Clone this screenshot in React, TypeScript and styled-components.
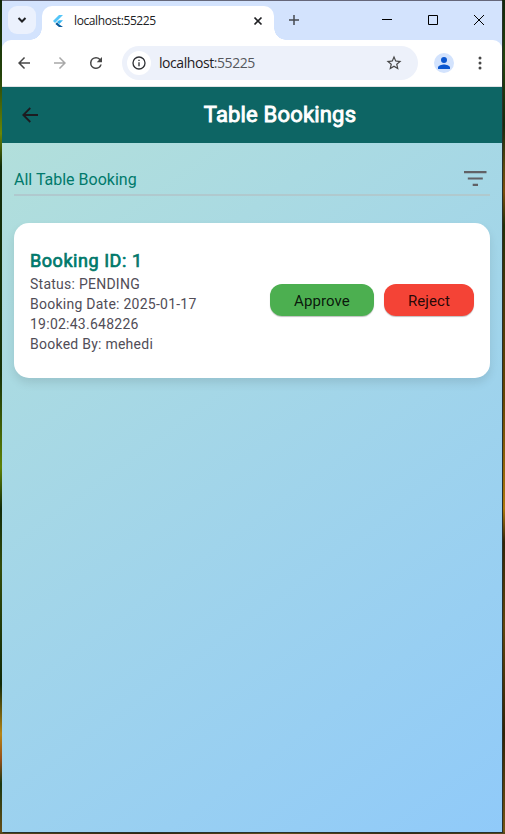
import React from "react";
import styled, { createGlobalStyle } from "styled-components";

const GlobalStyle = createGlobalStyle`
  * { box-sizing: border-box; }
  body { margin: 0; font-family: Roboto, sans-serif; overflow: hidden; }
  svg { display: block; flex: none; }
  button { font: inherit; border: 0; padding: 0; background: none; }
`;

const Desktop = styled.div`
  height: 834px;
  padding: 0 3px 2px 2px;
  background:
    linear-gradient(90deg, #57471a, #31260d 30%, #62501d 55%, #352b10 80%, #5a491b) 0 832px / 505px 2px no-repeat,
    linear-gradient(180deg, #12260b, #25430c 7%, #17290b 15%, #59480d 20%, #7a4d0b 23%, #223006 27%, #453509 35%, #654604 48%, #ad780c 61%, #322407 65%, #60450c 75%, #302207 88%, #765614) 502px 0 / 3px 834px no-repeat,
    linear-gradient(180deg, #10280a, #24430b 9%, #698606 16%, #112c09 20%, #173309 45%, #5d8206 56%, #112b0a 61%, #334c0b 68%, #102908 82%, #b68517 88%, #96501a 91%, #193812 94%, #6b4e17) 0 0 / 2px 834px no-repeat;
`;

const BrowserWindow = styled.div`
  height: 832px;
  display: flex;
  flex-direction: column;
  border-top: 1px solid #65677a;
  background: #d3e3fd;
  box-shadow: 1px 1px 0 #27302b;
`;

const TabStrip = styled.div`
  height: 39px;
  display: flex;
  align-items: flex-start;
`;

const TabSearch = styled.button`
  width: 28px;
  height: 28px;
  margin: 5px 0 0 6px;
  border-radius: 9px;
  display: grid;
  place-items: center;
  background: #ebf1fd;
`;

const Tab = styled.div`
  position: relative;
  width: 232px;
  height: 34px;
  margin: 5px 0 0 6px;
  padding: 0 10px 5px 10px;
  display: flex;
  align-items: center;
  border-radius: 10px 10px 0 0;
  background: #fff;
  &::before, &::after {
    content: "";
    position: absolute;
    bottom: 0;
    width: 12px;
    height: 12px;
  }
  &::before { left: -12px; background: radial-gradient(circle at 0 0, transparent 11.5px, #fff 12px); }
  &::after { right: -12px; background: radial-gradient(circle at 100% 0, transparent 11.5px, #fff 12px); }
`;

const TabTitle = styled.span`
  flex: 1;
  margin-left: 10px;
  font: 12px/16px "Open Sans", sans-serif;
  letter-spacing: -0.4px;
  color: #202124;
`;

const WindowControls = styled.div`
  margin-left: auto;
  display: flex;
  button { width: 46px; height: 38px; display: grid; place-items: center; }
`;

const NewTab = styled.button`
  width: 28px;
  height: 38px;
  margin-left: 6px;
  display: grid;
  place-items: center;
`;

const Toolbar = styled.div`
  height: 47px;
  display: flex;
  align-items: center;
  padding-left: 13px;
  background: #fff;
  border-radius: 9px 9px 0 0;
  border-bottom: 1px solid #dfe3e6;
`;

const NavIcons = styled.div`
  display: flex;
  gap: 18px;
  width: 107px;
`;

const AddressBar = styled.div`
  width: 296px;
  height: 34px;
  border-radius: 17px;
  display: flex;
  align-items: center;
  padding: 0 15px 0 5px;
  background: #edf1fa;
`;

const SiteInfo = styled.span`
  width: 24px;
  height: 24px;
  border-radius: 50%;
  display: grid;
  place-items: center;
  background: #fff;
`;

const Url = styled.span`
  flex: 1;
  margin-left: 8px;
  font: 14px/20px "Open Sans", sans-serif;
  letter-spacing: -0.43px;
  color: #1f2023;
  span { color: #55585d; }
`;

const Avatar = styled.span`
  width: 20px;
  height: 20px;
  margin: 0 24px 0 16px;
  border-radius: 50%;
  display: grid;
  place-items: center;
  background: #d3e3fd;
`;

const AppBar = styled.header`
  height: 56px;
  flex: none;
  display: flex;
  align-items: center;
  padding: 0 0 0 16px;
  background: #0d6564;
`;

const AppTitle = styled.h1`
  flex: 1;
  margin: 0 0 0 16px;
  text-align: center;
  font-size: 22px;
  line-height: 28px;
  font-weight: 400;
  letter-spacing: 0.18px;
  -webkit-text-stroke: 0.9px #fff;
  color: #fff;
`;

const Page = styled.main`
  flex: 1;
  padding: 16px 12px;
  background: linear-gradient(144deg, #b2dfdb, #90caf9);
`;

const FilterField = styled.div`
  height: 37px;
  display: flex;
  align-items: center;
  justify-content: space-between;
  padding: 6px 3px 0 0;
  border-bottom: 2px solid #b0c9ce;
  font-size: 16px;
  line-height: 24px;
  color: #00796b;
  svg { margin-top: -1px; }
`;

const Card = styled.section`
  height: 155px;
  margin-top: 27px;
  padding: 0 16px;
  display: flex;
  align-items: center;
  border-radius: 15px;
  background: #fff;
  box-shadow: 0 5px 10px rgba(0, 0, 0, 0.1);
`;

const Details = styled.div`
  flex: 1;
  font-size: 14px;
  line-height: 20px;
  letter-spacing: 0.25px;
  color: #514d57;
`;

const BookingId = styled.h2`
  margin: 0;
  font-size: 18px;
  line-height: 27px;
  font-weight: 400;
  letter-spacing: 0.55px;
  -webkit-text-stroke: 0.7px #00796b;
  color: #00796b;
`;

const Actions = styled.div`
  display: flex;
  gap: 10px;
`;

const ActionButton = styled.button<{ $color: string; $width: number }>`
  width: ${(p) => p.$width}px;
  height: 32px;
  padding-top: 1px;
  margin-top: -1px;
  border-radius: 12px;
  background: ${(p) => p.$color};
  box-shadow: 0 1px 1px rgba(0, 0, 0, 0.25);
  font-size: 15px;
  line-height: 20px;
  letter-spacing: 0.1px;
  color: rgba(0, 0, 0, 0.87);
`;

const ARROW = "M20 11H7.83l5.59-5.59L12 4l-8 8 8 8 1.41-1.41L7.83 13H20z";

const Icon = ({ d, size, color }: { d: string; size: number; color: string }) => (
  <svg width={size} height={size} viewBox="0 0 24 24" fill={color}><path d={d} /></svg>
);

export default function App() {
  return (
    <>
      <GlobalStyle />
      <Desktop>
        <BrowserWindow>
          <TabStrip>
            <TabSearch aria-label="Search tabs">
              <svg width="10" height="10" viewBox="0 0 10 10" fill="none" stroke="#202124" strokeWidth="2"><path d="M1.5 3 5 6.5 8.5 3" /></svg>
            </TabSearch>
            <Tab>
              <svg width="12" height="14" viewBox="0 0 12 14">
                <path d="M7 1h4L3 9 1 7z" fill="#54c5f8" />
                <path d="M7 6.3h4L7.3 10 5 8.1z" fill="#35b5f1" />
                <path d="M5 8.2 7 10.3l4 2.7H7L3.4 10z" fill="#075b9d" />
              </svg>
              <TabTitle>localhost:55225</TabTitle>
              <svg width="12" height="12" viewBox="0 0 12 12" stroke="#202124" strokeWidth="1.7"><path d="m2.5 2.5 7 7m0-7-7 7" /></svg>
            </Tab>
            <NewTab aria-label="New tab">
              <svg width="12" height="12" viewBox="0 0 12 12" stroke="#45494f" strokeWidth="1.5"><path d="M6 1v10M1 6h10" /></svg>
            </NewTab>
            <WindowControls>
              <button aria-label="Minimize"><svg width="10" height="10" stroke="#000"><path d="M0 4.5h10" /></svg></button>
              <button aria-label="Maximize"><svg width="10" height="10" stroke="#000" fill="none"><path d="M.5.5h9v9h-9z" /></svg></button>
              <button aria-label="Close"><svg width="10" height="10" stroke="#000"><path d="m0 0 10 10M10 0 0 10" /></svg></button>
            </WindowControls>
          </TabStrip>
          <Toolbar>
            <NavIcons>
              <Icon d={ARROW} size={18} color="#474747" />
              <Icon d="m12 4-1.41 1.41L16.17 11H4v2h12.17l-5.58 5.59L12 20l8-8z" size={18} color="#a8a8a8" />
              <Icon d="M17.65 6.35A7.96 7.96 0 0 0 12 4a8 8 0 1 0 7.73 10h-2.08A6 6 0 1 1 12 6c1.66 0 3.14.69 4.22 1.78L13 11h7V4z" size={18} color="#474747" />
            </NavIcons>
            <AddressBar>
              <SiteInfo><Icon d="M11 17h2v-6h-2v6zM11 7h2v2h-2zM12 2a10 10 0 1 0 0 20 10 10 0 0 0 0-20zm0 18a8 8 0 1 1 0-16 8 8 0 0 1 0 16z" size={16} color="#303236" /></SiteInfo>
              <Url>localhost<span>:55225</span></Url>
              <Icon d="m22 9.24-7.19-.62L12 2 9.19 8.63 2 9.24l5.46 4.73L5.82 21 12 17.27 18.18 21l-1.63-7.03zM12 15.4l-3.76 2.27 1-4.28-3.32-2.88 4.38-.38L12 6.1l1.71 4.04 4.38.38-3.32 2.88 1 4.28z" size={18} color="#474747" />
            </AddressBar>
            <Avatar><Icon d="M12 12a4 4 0 1 0 0-8 4 4 0 0 0 0 8zm0 2c-2.67 0-8 1.34-8 4v2h16v-2c0-2.66-5.33-4-8-4z" size={18} color="#0b57d0" /></Avatar>
            <svg width="4" height="16" fill="#474747"><circle cx="2" cy="3" r="1.5" /><circle cx="2" cy="8" r="1.5" /><circle cx="2" cy="13" r="1.5" /></svg>
          </Toolbar>
          <AppBar>
            <svg width="24" height="24" fill="none" stroke="#1d1b20" strokeWidth="1.8"><path d="M20 12H5.8M12.3 5 5.3 12l7 7" /></svg>
            <AppTitle>Table Bookings</AppTitle>
          </AppBar>
          <Page>
            <FilterField>
              All Table Booking
              <svg width="24" height="24" fill="#616166"><path d="M1 4h22.5v2.3H1zM4.8 10.4h15v2.2h-15zM9.7 16.8h5.3V19H9.7z" /></svg>
            </FilterField>
            <Card>
              <Details>
                <BookingId>Booking ID: 1</BookingId>
                Status: PENDING<br />
                Booking Date: 2025-01-17<br />
                19:02:43.648226<br />
                Booked By: mehedi
              </Details>
              <Actions>
                <ActionButton $color="#4caf50" $width={104}>Approve</ActionButton>
                <ActionButton $color="#f44336" $width={90}>Reject</ActionButton>
              </Actions>
            </Card>
          </Page>
        </BrowserWindow>
      </Desktop>
    </>
  );
}
